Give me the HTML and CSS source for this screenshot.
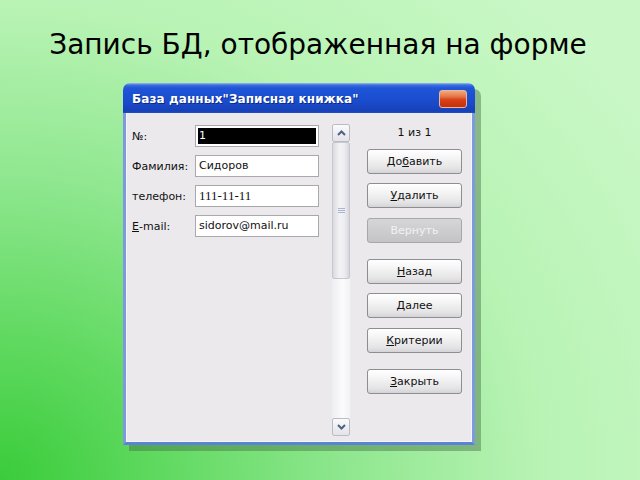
FILE: index.html
```html
<!DOCTYPE html>
<html lang="ru">
<head>
<meta charset="utf-8">
<title>Запись БД</title>
<link rel="stylesheet" href="styles.css">
</head>
<body>
<h1 class="title">Запись БД, отображенная на форме</h1>
<div class="window">
  <div class="titlebar">
    <span class="caption">База данных"Записная книжка"</span>
    <span class="close"></span>
  </div>
  <div class="client">
    <div class="fields">
      <div class="row"><span class="label">№:</span><div class="field current"><span class="sel">1</span></div></div>
      <div class="row"><span class="label">Фамилия:</span><div class="field">Сидоров</div></div>
      <div class="row"><span class="label">телефон:</span><div class="field serif">111-11-11</div></div>
      <div class="row"><span class="label"><u>E</u>-mail:</span><div class="field">sidorov@mail.ru</div></div>
    </div>
    <div class="scrollbar">
      <div class="sb-btn">
        <svg width="9" height="6" viewBox="0 0 9 6"><path d="M1 5 L4.5 1.5 L8 5" fill="none" stroke="#4d6185" stroke-width="2"/></svg>
      </div>
      <div class="thumb">
        <svg width="7" height="7" viewBox="0 0 7 7"><path d="M0 1.5H7M0 3.5H7M0 5.5H7" stroke="#a9b6cf" stroke-width="1"/></svg>
      </div>
      <div class="track"></div>
      <div class="sb-btn">
        <svg width="9" height="6" viewBox="0 0 9 6"><path d="M1 1 L4.5 4.5 L8 1" fill="none" stroke="#4d6185" stroke-width="2"/></svg>
      </div>
    </div>
    <div class="actions">
      <div class="counter">1 из 1</div>
      <div class="btn">До<u>б</u>авить</div>
      <div class="btn"><u>У</u>далить</div>
      <div class="btn disabled">Вернуть</div>
      <div class="btn sep"><u>Н</u>азад</div>
      <div class="btn"><u>Д</u>алее</div>
      <div class="btn"><u>К</u>ритерии</div>
      <div class="btn sep"><u>З</u>акрыть</div>
    </div>
  </div>
</div>
</body>
</html>
```

FILE: styles.css
```css
html, body {
  margin: 0;
  padding: 0;
  width: 640px;
  height: 480px;
  overflow: hidden;
}
body {
  background:
    radial-gradient(ellipse 120% 140% at 0% 100%, #3acc3a 0%, #62da62 22%, #8fe78f 45%, #b8f3b4 70%, #c9f8c6 100%);
  font-family: "DejaVu Sans", sans-serif;
}
.title {
  margin: 28px 0 0 0;
  font-family: "DejaVu Sans", sans-serif;
  font-weight: normal;
  font-size: 28px;
  line-height: 34px;
  text-align: center;
  color: #000;
  padding-right: 4px;
}
.window {
  margin: 21px 0 0 123px;
  width: 352px;
  height: 362px;
  display: flex;
  flex-direction: column;
  border-radius: 7px 7px 0 0;
  box-shadow: 6px 6px 0 rgba(70, 110, 70, 0.45);
}
.titlebar {
  height: 30px;
  flex: none;
  display: flex;
  align-items: center;
  justify-content: space-between;
  padding: 0 8px 0 9px;
  border-radius: 7px 7px 0 0;
  background: linear-gradient(to bottom, #9fb8ef 0px, #3d6fe0 2px, #1f55d6 5px, #1b4fd2 14px, #1a48c6 22px, #1540b6 28px, #2050c4 30px);
}
.caption {
  color: #fff;
  font-weight: bold;
  font-size: 12px;
  letter-spacing: 0.1px;
  text-shadow: 1px 1px 0 #0b2a82;
  margin-top: 2px;
}
.close {
  width: 28px;
  height: 18px;
  margin-top: 2px;
  border-radius: 3px;
  border: 1px solid #e9b7a0;
  box-sizing: border-box;
  background: linear-gradient(to bottom, #f2a87a 0%, #e67644 35%, #d8401a 55%, #c43008 100%);
}
.client {
  flex: 1;
  display: flex;
  align-items: flex-start;
  background: #ebe9ec;
  border: 3px solid #7d9ae0;
  border-top: none;
  border-bottom-color: #5a83d8;
  box-shadow: inset 1px 0 0 #f4f6fb, inset -1px 0 0 #f4f6fb, inset 0 -1px 0 #f4f6fb;
  padding: 11px 9px 5px 6px;
}
.fields {
  width: 187px;
  margin-top: 1px;
  display: flex;
  flex-direction: column;
  gap: 8px;
}
.row {
  display: flex;
  align-items: center;
  height: 22px;
}
.label {
  width: 63px;
  font-size: 11px;
  color: #111;
}
.field {
  width: 124px;
  height: 22px;
  box-sizing: border-box;
  border: 1px solid #a9a9ad;
  background: #fff;
  font-size: 11px;
  line-height: 20px;
  padding-left: 3px;
  color: #111;
}
.field.serif {
  font-family: "Liberation Serif", serif;
  font-size: 13px;
}
.field.current {
  padding: 2px;
}
.sel {
  display: block;
  height: 16px;
  background: #000;
  color: #fff;
  line-height: 16px;
  padding-left: 1px;
}
.scrollbar {
  width: 18px;
  height: 312px;
  margin-left: 13px;
  display: flex;
  flex-direction: column;
  background: linear-gradient(to right, #eeeef2, #fbfbfd 60%, #f2f2f5);
}
.sb-btn {
  height: 18px;
  flex: none;
  box-sizing: border-box;
  border: 1px solid #b9bcc6;
  border-radius: 2px;
  background: linear-gradient(to bottom, #fbfbfc, #e3e3e8);
  display: flex;
  align-items: center;
  justify-content: center;
}
.thumb {
  height: 137px;
  flex: none;
  box-sizing: border-box;
  border: 1px solid #c5c8d0;
  border-radius: 2px;
  background: linear-gradient(to right, #d9d9df, #f3f3f6 40%, #eeeef2 70%, #d6d6dc);
  display: flex;
  align-items: center;
  justify-content: center;
}
.track {
  flex: 1;
}
.actions {
  width: 95px;
  margin-left: 17px;
  display: flex;
  flex-direction: column;
}
.counter {
  margin-top: 2px;
  height: 13px;
  line-height: 13px;
  font-size: 11px;
  text-align: center;
  color: #111;
}
.btn {
  height: 25px;
  margin-top: 9.5px;
  box-sizing: border-box;
  border: 1px solid #8d8d92;
  border-radius: 3px;
  background: linear-gradient(to bottom, #ffffff 0%, #f3f3f3 40%, #e4e4e6 80%, #d4d4d8 100%);
  font-size: 11px;
  line-height: 23px;
  text-align: center;
  color: #111;
}
.btn:first-of-type {
  margin-top: 8px;
}
.btn.sep {
  margin-top: 16px;
}
.btn.disabled {
  background: linear-gradient(to bottom, #d6d6d8, #c4c4c7);
  border-color: #a8a8ac;
  color: #f1f1f3;
}
```
